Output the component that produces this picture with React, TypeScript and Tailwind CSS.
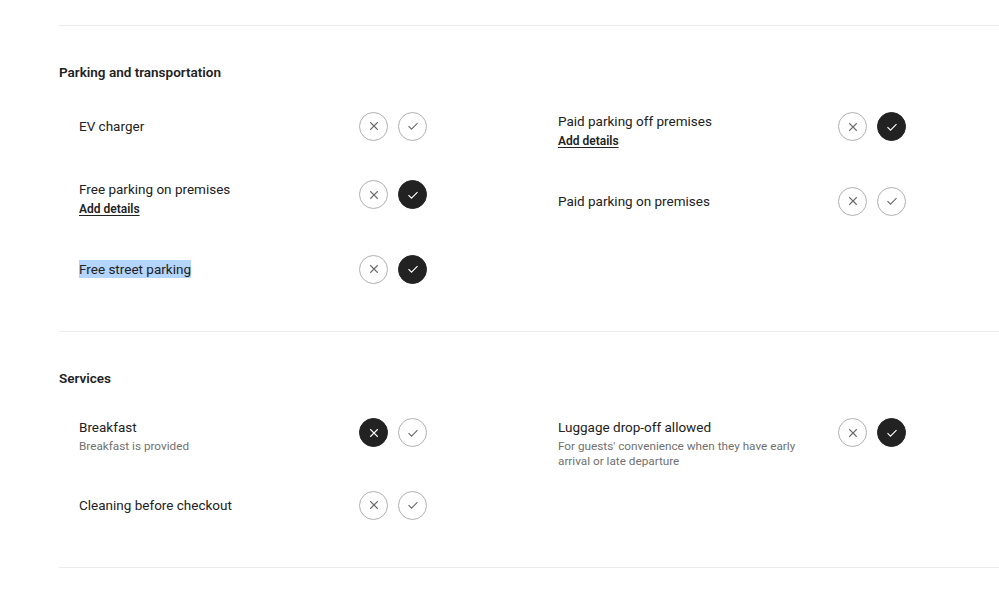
import React from "react";

type Item = {
  title: React.ReactNode;
  sub?: string;
  link?: boolean;
  state: "none" | "no" | "yes";
};

const XIcon = () => (
  <svg viewBox="0 0 32 32" width="12" height="12" fill="none" stroke="currentColor" strokeWidth="3" aria-hidden="true">
    <path d="m6 6 20 20M26 6 6 26" />
  </svg>
);

const CheckIcon = () => (
  <svg viewBox="0 0 32 32" width="12" height="12" fill="none" stroke="currentColor" strokeWidth="3" aria-hidden="true">
    <path d="m4 16.5 8 8 16-16" />
  </svg>
);

function Toggle({ active, children }: { active: boolean; children: React.ReactNode }) {
  return (
    <button
      className={
        active
          ? "w-[29px] h-[29px] rounded-full flex items-center justify-center bg-[#222222] border border-[#222222] text-white"
          : "w-[29px] h-[29px] rounded-full flex items-center justify-center bg-white border border-[#b0b0b0] text-[#6a6a6a]"
      }
    >
      {children}
    </button>
  );
}

function Row({ item }: { item: Item }) {
  const multi = !!item.sub || !!item.link;
  return (
    <div className={multi ? "flex justify-between items-start" : "flex justify-between items-center min-h-[34px]"}>
      <div className={multi ? "flex flex-col max-w-[245px] pt-[2px]" : "flex flex-col max-w-[245px]"}>
        <div className="text-[13.5px] leading-[20px] text-[#222222]">{item.title}</div>
        {item.link && (
          <a className="text-[12px] leading-[18px] mt-[1px] font-semibold text-[#222222] underline underline-offset-2 cursor-pointer">
            Add details
          </a>
        )}
        {item.sub && <div className="text-[11.75px] leading-[15px] mt-[2px] text-[#717171]">{item.sub}</div>}
      </div>
      <div className={multi ? "flex gap-[10px] mt-[3px]" : "flex gap-[10px]"}>
        <Toggle active={item.state === "no"}>
          <XIcon />
        </Toggle>
        <Toggle active={item.state === "yes"}>
          <CheckIcon />
        </Toggle>
      </div>
    </div>
  );
}

function Section({ title, left, right }: { title: string; left: Item[]; right: Item[] }) {
  return (
    <section className="border-t border-[#ebebeb] pt-[36px] pb-[45px]">
      <h2 className="text-[13.5px] leading-[20px] font-semibold text-[#222222]">{title}</h2>
      <div className="mt-[27px] ml-[20px] grid grid-cols-[348px_348px] gap-x-[131px]">
        <div className="flex flex-col gap-[34px]">
          {left.map((it, i) => (
            <Row key={i} item={it} />
          ))}
        </div>
        <div className="flex flex-col gap-[34px]">
          {right.map((it, i) => (
            <Row key={i} item={it} />
          ))}
        </div>
      </div>
    </section>
  );
}

export default function App() {
  return (
    <div className="min-h-screen bg-white" style={{ fontFamily: "Roboto, 'Noto Sans', sans-serif" }}>
      <div className="ml-[59px] pt-[25px]">
        <Section
          title="Parking and transportation"
          left={[
            { title: "EV charger", state: "none" },
            { title: "Free parking on premises", link: true, state: "yes" },
            {
              title: <span className="bg-[#b4d5fe] py-[1px]">Free street parking</span>,
              state: "yes",
            },
          ]}
          right={[
            { title: "Paid parking off premises", link: true, state: "yes" },
            { title: "Paid parking on premises", state: "none" },
          ]}
        />
        <Section
          title="Services"
          left={[
            { title: "Breakfast", sub: "Breakfast is provided", state: "no" },
            { title: "Cleaning before checkout", state: "none" },
          ]}
          right={[
            {
              title: "Luggage drop-off allowed",
              sub: "For guests' convenience when they have early arrival or late departure",
              state: "yes",
            },
          ]}
        />
        <div className="border-t border-[#ebebeb]" />
      </div>
    </div>
  );
}
